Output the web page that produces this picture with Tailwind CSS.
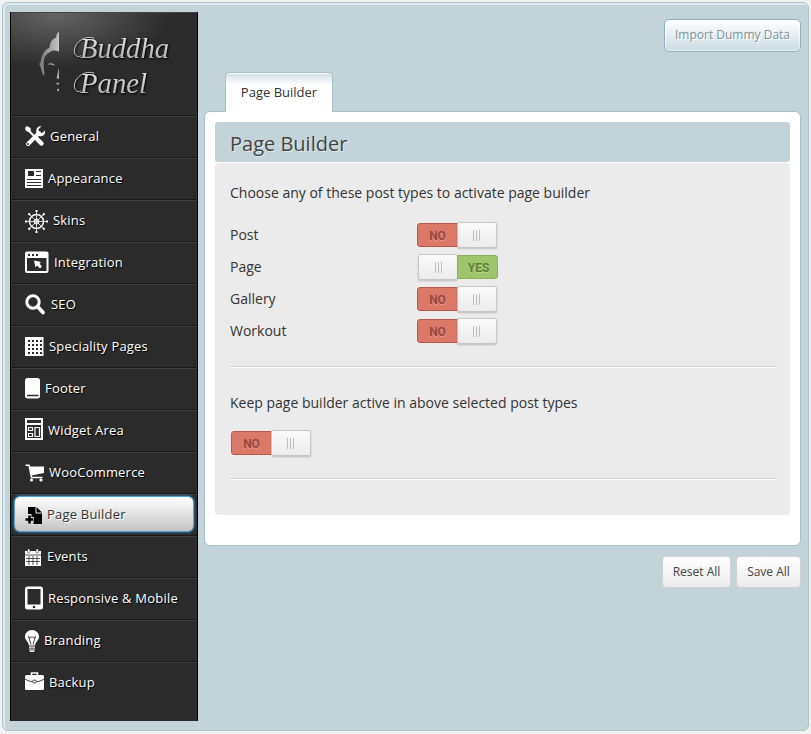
<!DOCTYPE html>
<html lang="en">
<head>
<meta charset="utf-8">
<title>Buddha Panel</title>
<script src="https://cdn.jsdelivr.net/npm/@tailwindcss/browser@4"></script>
</head>
<body class="bg-[#f1f1f1] p-[2px] font-['Open_Sans',sans-serif] text-[#333]">
<div class="flex w-[807px] h-[729px] rounded-[6px] border border-[#adc3ca] bg-[#c2d4da] pl-[7px] pt-[9px] shadow-[inset_1px_1px_0_1px_#dfeaee]">

  <aside class="w-[188px] h-[709px] shrink-0 border-x border-black bg-[#2b2b2b] text-white text-[13px]">
    <header class="h-[104px] border-t border-t-[#444] border-b border-b-[#191919] bg-[radial-gradient(ellipse_115px_55px_at_45px_0px,#656565,#2b2b2b)]">
      <svg class="block" width="186" height="102" viewBox="11 13 186 102">
        <defs>
          <linearGradient id="silver" x1="0" y1="0" x2="1" y2="0"><stop offset="0" stop-color="#777"/><stop offset="1" stop-color="#c6c6c6"/></linearGradient>
          <linearGradient id="script" x1="0" y1="0" x2="0" y2="1"><stop offset="0" stop-color="#f2f2f2"/><stop offset="1" stop-color="#a5a5a5"/></linearGradient>
        </defs>
        <path fill="url(#silver)" d="M59 32v19.500c-4-1.500-7-1-9.500.8-3.500 2.200-5.200 4.500-5.700 8-.4 5 .2 10 .7 15.500-1.500-.3-3-4-3.700-8.500-1.300-1.500-1.800-3.500-1-4.800.7 0 .9-1 1.200-2.500.7-5.500 4-10.500 8.700-12.500-.2-4.500 1.800-8 6.500-10 .2-2.500.6-4.500 2.800-5.500z"/>
        <path fill="#aaa" d="M47.500 64.500c2.500-2 6-1.500 7.500 1.200-2.500-1.200-4.500-1.400-7.500-1.200zM59 68v11l-2.500-.7c.8-3 1.200-6.300 2.500-10.300zM56 83l3-.5v2h-2zM57 89l2-.5v3l-2-1z"/>
        <g fill="url(#script)" font-family="Liberation Serif, serif" font-style="italic" font-size="30" style="filter:drop-shadow(1px 1px 1px #000)">
          <g fill="none" stroke="#c4c4c4" stroke-width="1" stroke-linecap="round">
            <path d="M94 38C86 35 76 41 74.500 49c-1 6 3 9 6 7"/>
            <path d="M94 73C86 70 76 76 74.500 84c-1 6 3 9 6 7"/>
          </g>
          <text x="80" y="58" textLength="89" lengthAdjust="spacingAndGlyphs">Buddha</text>
          <text x="80" y="93" textLength="67" lengthAdjust="spacingAndGlyphs">Panel</text>
        </g>
      </svg>
    </header>
    <nav class="tracking-[0.2px] [text-shadow:1px_1px_1px_#000]">
      <a class="flex h-[42px] items-center border-t border-t-[#3f3f3f] border-b border-b-[#191919] pl-[14px]">
        <svg class="shrink-0" width="25" height="42" viewBox="0 0 25 42"><path stroke="#fff" fill="none" stroke-width="4" stroke-linecap="round" d="M3 28L14 17"/><path fill="#fff" d="M16.500 10c-4 0-6 3-5 7l3 3c4 1 6-2 5.500-5.500l-3 2.500-3-.6-.6-3z"/><circle cx="3" cy="28" r="1" fill="#2b2b2b"/><path stroke="#fff" fill="none" stroke-width="2" d="M2 13l9 9"/><path fill="#fff" d="M0 12l2-2 3.500 2 .5 3-2 1-3-1z"/><path stroke="#fff" stroke-width="4.500" stroke-linecap="round" d="M12.500 23.500l4 4"/></svg>
        <span>General</span></a>
      <a class="flex h-[42px] items-center border-t border-t-[#3f3f3f] border-b border-b-[#191919] pl-[14px]">
        <svg class="shrink-0" width="23" height="42" viewBox="0 0 23 42"><path fill="#fff" d="M0 11h18v19H0z"/><path stroke="#2b2b2b" stroke-width="1" d="M11 13.500h5M11 17.500h5M2 21.500h14M2 24.500h14M2 27.500h14"/><path fill="#2b2b2b" d="M3 13h6v5H3z"/></svg>
        <span>Appearance</span></a>
      <a class="flex h-[42px] items-center border-t border-t-[#3f3f3f] border-b border-b-[#191919] pl-[14px]">
        <svg class="shrink-0" width="28" height="42" viewBox="0 0 28 42"><g fill="none" stroke="#fff"><circle cx="11.500" cy="21.500" r="7" stroke-width="1.500"/><circle cx="11.500" cy="21.500" r="2.500"/><path stroke-width=".8" d="M11.500 10v23M0 21.500h23M3.500 13.500l16 16M19.500 13.500l-16 16"/><path stroke-width="2" d="M11.500 10v2M11.500 31v2M0 21.500h2M21 21.500h2M3.500 13.500l1.500 1.500M18 28l1.500 1.500M19.500 13.500L18 15M5 28l-1.500 1.500"/></g></svg>
        <span>Skins</span></a>
      <a class="flex h-[42px] items-center border-t border-t-[#3f3f3f] border-b border-b-[#191919] pl-[14px]">
        <svg class="shrink-0" width="29" height="42" viewBox="0 0 29 42"><rect y="9.500" width="23.500" height="21.500" rx="2" fill="#fff"/><path fill="#2b2b2b" d="M2 16h19.500v13H2zM3 12h2v2H3zM7 12h2v2H7zM11 12h2v2h-2z"/><path fill="#fff" d="M9 18.500l7 1.500-1.500 1.500 2.500 3-2 2-3-3-1.500 2z"/></svg>
        <span>Integration</span></a>
      <a class="flex h-[42px] items-center border-t border-t-[#3f3f3f] border-b border-b-[#191919] pl-[14px]">
        <svg class="shrink-0" width="26" height="42" viewBox="0 0 26 42"><circle cx="8" cy="18" r="6.200" fill="none" stroke="#fff" stroke-width="3"/><path d="M12.500 22.500l5.500 6" stroke="#fff" stroke-width="3.800" stroke-linecap="round"/></svg>
        <span>SEO</span></a>
      <a class="flex h-[42px] items-center border-t border-t-[#3f3f3f] border-b border-b-[#191919] pl-[14px]">
        <svg class="shrink-0" width="24" height="42" viewBox="0 0 24 42"><path fill="#fff" d="M0 11h18.500v19H0z"/><path stroke="#2b2b2b" stroke-width="2" stroke-dasharray="2 2" d="M3 15h14M3 19h14M3 23h14M3 27h14"/></svg>
        <span>Speciality Pages</span></a>
      <a class="flex h-[42px] items-center border-t border-t-[#3f3f3f] border-b border-b-[#191919] pl-[14px]">
        <svg class="shrink-0" width="20" height="42" viewBox="0 0 20 42"><rect y="10" width="15" height="20.500" rx="2.500" fill="#fff"/><path stroke="#2b2b2b" stroke-width="1.500" d="M2 27.500h11.500"/></svg>
        <span>Footer</span></a>
      <a class="flex h-[42px] items-center border-t border-t-[#3f3f3f] border-b border-b-[#191919] pl-[14px]">
        <svg class="shrink-0" width="23" height="42" viewBox="0 0 23 42"><path fill="#fff" d="M0 8h18v22H0z"/><path fill="#2b2b2b" d="M2 10h14v3H2zM2 15h14v13H2z"/><path fill="none" stroke="#fff" stroke-width="1.200" d="M3.500 17.500h4v3h-4zM3.500 23.500h4v3h-4zM10 17.500h4.500v9H10z"/></svg>
        <span>Widget Area</span></a>
      <a class="flex h-[42px] items-center border-t border-t-[#3f3f3f] border-b border-b-[#191919] pl-[14px]">
        <svg class="shrink-0" width="24" height="42" viewBox="0 0 24 42"><path fill="#fff" d="M4.500 14.500H19v6.500L6.500 23.500z"/><path fill="none" stroke="#fff" stroke-width="1.500" d="M.5 13.200H4L6.500 25.500H17.500"/><circle cx="6.500" cy="28" r="1.600" fill="#fff"/><circle cx="16" cy="28" r="1.600" fill="#fff"/></svg>
        <span>WooCommerce</span></a>
      <a class="flex h-[42px] border-t border-t-[#3f3f3f] border-b border-b-[#191919] px-[3px] pt-[1px] text-[#333] [text-shadow:1px_1px_0_#fff]">
        <span class="flex h-[36px] w-full items-center rounded-[6px] border border-[#4f9fd8] bg-linear-to-b from-white to-[#c4c4c4] pl-[10px] shadow-[0_0_3px_#4f9fd8]">
        <svg class="shrink-0" width="22" height="34" viewBox="0 3 22 34"><path d="M3 13h7.500v6.500H17V30H8.500v-2.500H9v-4.500H6.500v-3H3zM11.500 13l5.500 5.500h-5.500z"/><path stroke="#000" stroke-width="2.500" d="M4.500 21.500v8M.5 25.500h8"/></svg>
        <span class="pt-[2px]">Page Builder</span></span></a>
      <a class="flex h-[42px] items-center border-t border-t-[#3f3f3f] border-b border-b-[#191919] pl-[14px]">
        <svg class="shrink-0" width="22" height="42" viewBox="0 0 22 42"><path fill="#fff" d="M0 15h16v15H0z"/><path fill="none" stroke="#2b2b2b" stroke-width=".8" d="M0 19h16M1 22.500h14M1 25.500h14M4 20v9M8 20v9M12 20v9"/><rect x="2.500" y="13" width="2.500" height="4" rx="1" fill="#fff" stroke="#2b2b2b" stroke-width=".6"/><rect x="11" y="13" width="2.500" height="4" rx="1" fill="#fff" stroke="#2b2b2b" stroke-width=".6"/></svg>
        <span>Events</span></a>
      <a class="flex h-[42px] items-center border-t border-t-[#3f3f3f] border-b border-b-[#191919] pl-[14px]">
        <svg class="shrink-0" width="23" height="42" viewBox="0 0 23 42"><rect y="8.500" width="18" height="23" rx="2.500" fill="#fff"/><path fill="#2b2b2b" d="M2.500 11h13v15.500h-13z"/><circle cx="9" cy="29" r="1.300" fill="#2b2b2b"/></svg>
        <span>Responsive &amp; Mobile</span></a>
      <a class="flex h-[42px] items-center border-t border-t-[#3f3f3f] border-b border-b-[#191919] pl-[14px]">
        <svg class="shrink-0" width="19" height="42" viewBox="0 0 19 42"><path fill="#fff" d="M7 10c4 0 7 3 7 6.500 0 4-3.500 5-4 9H4c-.5-4-4-5-4-9C0 13 3 10 7 10zM4 26.500h6v4L8.500 32h-3L4 30.500z"/><path fill="none" stroke="#2b2b2b" stroke-width=".9" d="M6 24.500L3.500 16.500l2 1.500L7 16.500 8.500 18l2-1.500L8 24.500M4 28.200h6M4 30h6"/></svg>
        <span>Branding</span></a>
      <a class="flex h-[41px] items-center border-t border-t-[#3f3f3f] pl-[14px]">
        <svg class="shrink-0" width="24" height="42" viewBox="0 0 24 42"><rect y="13" width="19" height="15" rx="1.500" fill="#fff"/><path fill="none" stroke="#fff" stroke-width="1.500" d="M6.500 13v-2h6v2"/><path fill="none" stroke="#2b2b2b" stroke-width=".9" d="M0 17c3 2 5 2.500 8 2.500M19 17c-3 2-5 2.500-8 2.500"/><ellipse cx="9.500" cy="19.500" rx="2" ry="1.500" fill="#ddd" stroke="#2b2b2b" stroke-width=".8"/></svg>
        <span>Backup</span></a>
    </nav>
  </aside>

  <main class="ml-[6px] flex w-[597px] flex-col pt-[7px]">
    <button class="h-[33px] w-[137px] self-end rounded-[5px] border border-[#93b0ba] bg-linear-to-b from-white to-[#cadce3] pb-[2px] text-[12px] whitespace-nowrap text-[#7b929c] [text-shadow:1px_1px_0_#fff] shadow-[inset_0_0_0_1px_#ffffff88]">Import Dummy Data</button>
    <div class="relative z-10 mt-[20px] ml-[21px] h-[40px] w-[108px] rounded-t-[5px] border border-b-0 border-[#a5bfc7] bg-[linear-gradient(#cfdfe5,#fff_12px)] pt-[10px] text-center text-[13px] leading-[19px] shadow-[inset_0_1px_0_#fff]">Page Builder</div>
    <section class="-mt-px h-[435px] rounded-[6px] border border-[#a5bfc7] bg-white px-[10px] pt-[10px]">
      <h1 class="h-[40px] w-[575px] rounded-[3px] bg-[#c2d4da] pl-[15px] text-[20px] leading-[43px] text-[#444] [text-shadow:1px_1px_0_#ffffff88]">Page Builder</h1>
      <div class="mt-px h-[352px] w-[575px] rounded-[4px] bg-[#ebebeb] pr-[14px] pl-[15px] pt-[20px] text-[14px] leading-[20px]">
        <p>Choose any of these post types to activate page builder</p>
        <div class="mt-[16px] flex flex-col">
          <div class="flex h-[32px] items-center"><span class="w-[187px]">Post</span>
            <span class="flex items-center font-['Roboto',sans-serif] text-[12px] font-bold"><i class="h-[24px] w-[41px] rounded-l-[3px] border border-[#b9594a] bg-[#dc7868] text-center leading-[24px] not-italic text-[#96483c] [text-shadow:0_1px_0_#ec9a8c]">NO</i><i class="-ml-px flex h-[26px] w-[40px] items-center justify-center gap-[2px] rounded-[2px] border border-[#c6c6c6] bg-linear-to-b from-[#fafafa] to-[#ececec] pr-[2px] shadow-[0_1px_2px_#0003]"><b class="h-[11px] w-px bg-[#bdbdbd]"></b><b class="h-[11px] w-px bg-[#bdbdbd]"></b><b class="h-[11px] w-px bg-[#bdbdbd]"></b></i></span></div>
          <div class="flex h-[32px] items-center"><span class="w-[188px]">Page</span>
            <span class="flex items-center font-['Roboto',sans-serif] text-[12px] font-bold"><i class="flex h-[26px] w-[40px] items-center justify-center gap-[2px] rounded-[2px] border border-[#c6c6c6] bg-linear-to-b from-[#fafafa] to-[#ececec] shadow-[0_1px_2px_#0003]"><b class="h-[11px] w-px bg-[#bdbdbd]"></b><b class="h-[11px] w-px bg-[#bdbdbd]"></b><b class="h-[11px] w-px bg-[#bdbdbd]"></b></i><i class="-ml-px h-[24px] w-[41px] rounded-r-[3px] border border-[#8ab058] bg-[#9fc56c] pl-[2px] text-center leading-[24px] not-italic text-[#5f7d38] [text-shadow:0_1px_0_#b9dc8a]">YES</i></span></div>
          <div class="flex h-[32px] items-center"><span class="w-[187px]">Gallery</span>
            <span class="flex items-center font-['Roboto',sans-serif] text-[12px] font-bold"><i class="h-[24px] w-[41px] rounded-l-[3px] border border-[#b9594a] bg-[#dc7868] text-center leading-[24px] not-italic text-[#96483c] [text-shadow:0_1px_0_#ec9a8c]">NO</i><i class="-ml-px flex h-[26px] w-[40px] items-center justify-center gap-[2px] rounded-[2px] border border-[#c6c6c6] bg-linear-to-b from-[#fafafa] to-[#ececec] pr-[2px] shadow-[0_1px_2px_#0003]"><b class="h-[11px] w-px bg-[#bdbdbd]"></b><b class="h-[11px] w-px bg-[#bdbdbd]"></b><b class="h-[11px] w-px bg-[#bdbdbd]"></b></i></span></div>
          <div class="flex h-[32px] items-center"><span class="w-[187px]">Workout</span>
            <span class="flex items-center font-['Roboto',sans-serif] text-[12px] font-bold"><i class="h-[24px] w-[41px] rounded-l-[3px] border border-[#b9594a] bg-[#dc7868] text-center leading-[24px] not-italic text-[#96483c] [text-shadow:0_1px_0_#ec9a8c]">NO</i><i class="-ml-px flex h-[26px] w-[40px] items-center justify-center gap-[2px] rounded-[2px] border border-[#c6c6c6] bg-linear-to-b from-[#fafafa] to-[#ececec] pr-[2px] shadow-[0_1px_2px_#0003]"><b class="h-[11px] w-px bg-[#bdbdbd]"></b><b class="h-[11px] w-px bg-[#bdbdbd]"></b><b class="h-[11px] w-px bg-[#bdbdbd]"></b></i></span></div>
        </div>
        <div class="mt-[19px] h-[2px] border-t border-[#cfcfcf] bg-white"></div>
        <p class="mt-[25px]">Keep page builder active in above selected post types</p>
        <div class="mt-[17px] ml-px flex h-[26px] items-center font-['Roboto',sans-serif] text-[12px] font-bold"><i class="h-[24px] w-[41px] rounded-l-[3px] border border-[#b9594a] bg-[#dc7868] text-center leading-[24px] not-italic text-[#96483c] [text-shadow:0_1px_0_#ec9a8c]">NO</i><i class="-ml-px flex h-[26px] w-[40px] items-center justify-center gap-[2px] rounded-[2px] border border-[#c6c6c6] bg-linear-to-b from-[#fafafa] to-[#ececec] pr-[2px] shadow-[0_1px_2px_#0003]"><b class="h-[11px] w-px bg-[#bdbdbd]"></b><b class="h-[11px] w-px bg-[#bdbdbd]"></b><b class="h-[11px] w-px bg-[#bdbdbd]"></b></i></div>
        <div class="mt-[22px] h-[2px] border-t border-[#cfcfcf] bg-white"></div>
      </div>
    </section>
    <footer class="mt-[10px] flex justify-end gap-[5px] text-[12px] text-[#444]">
      <button class="h-[32px] w-[69px] rounded-[4px] border border-[#d5d0d3] bg-linear-to-b from-white to-[#ececec] whitespace-nowrap">Reset All</button>
      <button class="h-[32px] w-[65px] rounded-[4px] border border-[#d5d0d3] bg-linear-to-b from-white to-[#ececec] whitespace-nowrap">Save All</button>
    </footer>
  </main>
</div>
</body>
</html>
